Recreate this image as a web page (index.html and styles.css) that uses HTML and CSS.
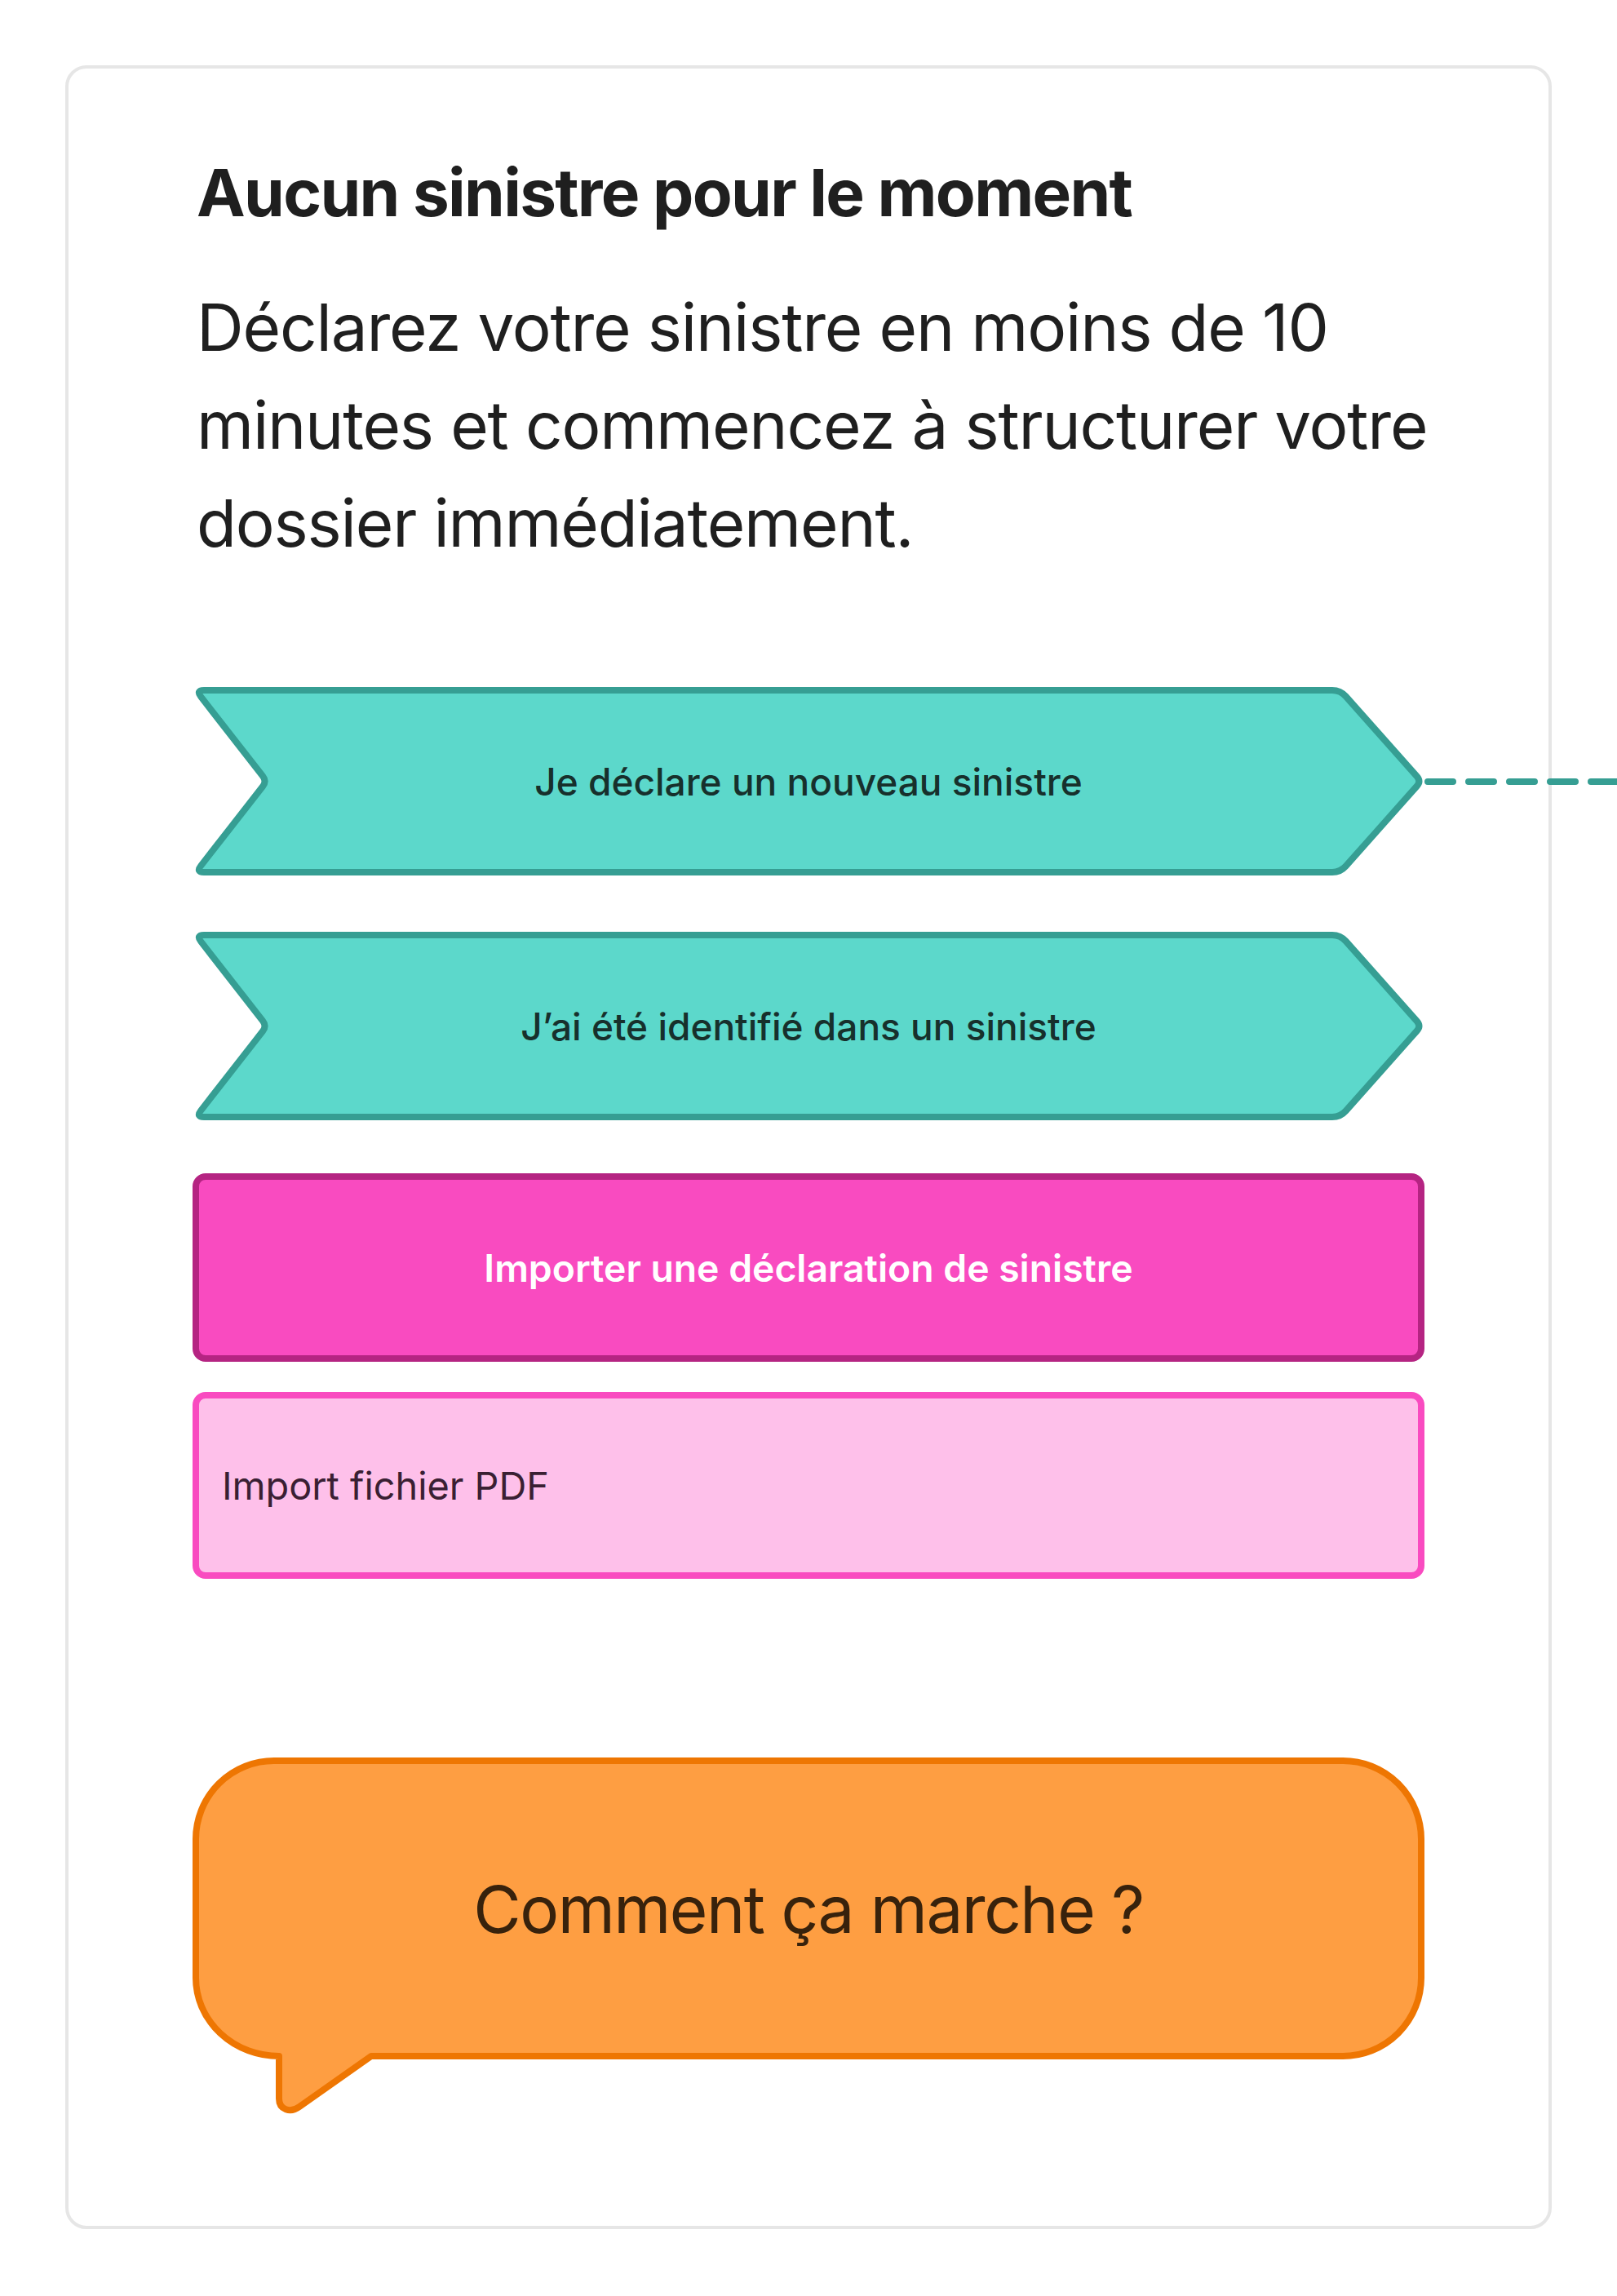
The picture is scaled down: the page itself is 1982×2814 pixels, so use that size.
FILE: index.html
```html
<!DOCTYPE html>
<html lang="fr">
<head>
<meta charset="utf-8">
<title>Aucun sinistre</title>
<link rel="stylesheet" href="styles.css">
</head>
<body>
<main class="card">
  <h1 class="title">Aucun sinistre pour le moment</h1>
  <p class="lead">Déclarez votre sinistre en moins de 10 minutes et commencez à structurer votre dossier immédiatement.</p>

  <div class="actions">
    <button class="chevron chevron-first" type="button">
      <svg class="chevron-shape" viewBox="0 0 1510 231" preserveAspectRatio="none" aria-hidden="true">
        <path d="M14 4 L1397 4 Q1407 4 1413.6 11.5 L1500.7 109.5 Q1506 115.5 1500.7 121.5 L1413.6 219.5 Q1407 227 1397 227 L14 227 Q4 227 10.2 219.1 L86.1 121.8 Q91 115.5 86.1 109.2 L10.2 11.9 Q4 4 14 4 Z"/>
      </svg>
      <svg class="connector" viewBox="0 0 260 10" aria-hidden="true">
        <line x1="4" y1="5" x2="260" y2="5"/>
      </svg>
      <span class="chevron-label">Je déclare un nouveau sinistre</span>
    </button>

    <button class="chevron chevron-second" type="button">
      <svg class="chevron-shape" viewBox="0 0 1510 231" preserveAspectRatio="none" aria-hidden="true">
        <path d="M14 4 L1397 4 Q1407 4 1413.6 11.5 L1500.7 109.5 Q1506 115.5 1500.7 121.5 L1413.6 219.5 Q1407 227 1397 227 L14 227 Q4 227 10.2 219.1 L86.1 121.8 Q91 115.5 86.1 109.2 L10.2 11.9 Q4 4 14 4 Z"/>
      </svg>
      <span class="chevron-label">J’ai été identifié dans un sinistre</span>
    </button>

    <button class="import-btn" type="button">Importer une déclaration de sinistre</button>

    <div class="pdf-drop">Import fichier PDF</div>
  </div>

  <button class="bubble" type="button">
    <svg class="bubble-shape" viewBox="0 0 1510 440" aria-hidden="true">
      <path d="M100 4 H1410 A96 96 0 0 1 1506 100 V270 A96 96 0 0 1 1410 366 H219 L131 428 C120 436 106 432 106 418 V366 A102 96 0 0 1 4 270 V100 A96 96 0 0 1 100 4 Z"/>
    </svg>
    <span class="bubble-label">Comment ça marche ?</span>
  </button>
</main>
</body>
</html>
```

FILE: styles.css
```css
html, body {
  margin: 0;
  padding: 0;
  background: #ffffff;
  overflow-x: hidden;
}

body {
  font-family: Inter, "Noto Sans", "Liberation Sans", sans-serif;
  color: #1f1f1f;
}

.card {
  margin: 80px;
  height: 2652px;
  box-sizing: border-box;
  border: 4px solid #e6e6e6;
  border-radius: 26px;
  padding: 104px 152px 0 152px;
  display: flex;
  flex-direction: column;
}

.title {
  margin: 0 -30px 0 5px;
  font-size: 80px;
  line-height: 96px;
  font-weight: 700;
  letter-spacing: -1.7px;
  color: #1f1f1f;
}

.lead {
  margin: 57px -30px 0 5px;
  font-size: 80px;
  line-height: 120px;
  font-weight: 400;
  letter-spacing: -1.2px;
  color: #1f1f1f;
}

.actions {
  margin-top: 141px;
  display: flex;
  flex-direction: column;
}

button {
  font-family: inherit;
  cursor: pointer;
}

.chevron {
  position: relative;
  width: 1510px;
  height: 231px;
  padding: 0;
  border: 0;
  background: transparent;
  display: flex;
  align-items: center;
  justify-content: center;
}

.chevron-second {
  margin-top: 69px;
}

.chevron-shape {
  position: absolute;
  left: 0;
  top: 0;
  width: 100%;
  height: 100%;
  overflow: visible;
}

.chevron-shape path {
  fill: #5cd8cb;
  stroke: #369e93;
  stroke-width: 8;
  stroke-linejoin: round;
}

.connector {
  position: absolute;
  left: 1510px;
  top: 110.5px;
  width: 260px;
  height: 10px;
  overflow: visible;
}

.connector line {
  stroke: #369e93;
  stroke-width: 8;
  stroke-linecap: round;
  stroke-dasharray: 31 19;
}

.chevron-label {
  position: relative;
  font-size: 46px;
  font-weight: 500;
  color: #17302c;
}

.import-btn {
  margin-top: 65px;
  width: 1510px;
  height: 231px;
  box-sizing: border-box;
  background: #f94bc0;
  border: 8px solid #b52482;
  border-radius: 16px;
  color: #ffffff;
  font-size: 46.3px;
  font-weight: 600;
  display: flex;
  align-items: center;
  justify-content: center;
}

.pdf-drop {
  margin-top: 37px;
  width: 1510px;
  height: 229px;
  box-sizing: border-box;
  background: #fec0ea;
  border: 8px solid #f94bc0;
  border-radius: 16px;
  padding: 0 28px;
  display: flex;
  align-items: center;
  font-size: 46.8px;
  font-weight: 400;
  color: #3a1f33;
}

.bubble {
  position: relative;
  margin-top: 219px;
  width: 1510px;
  height: 370px;
  padding: 0;
  border: 0;
  background: transparent;
  display: flex;
  align-items: center;
  justify-content: center;
}

.bubble-shape {
  position: absolute;
  left: 0;
  top: 0;
  width: 1510px;
  height: 440px;
  overflow: visible;
}

.bubble-shape path {
  fill: #fe9e42;
  stroke: #ee7602;
  stroke-width: 8;
  stroke-linejoin: round;
}

.bubble-label {
  position: relative;
  font-size: 80px;
  font-weight: 400;
  letter-spacing: -1.5px;
  color: #38220c;
}
```
